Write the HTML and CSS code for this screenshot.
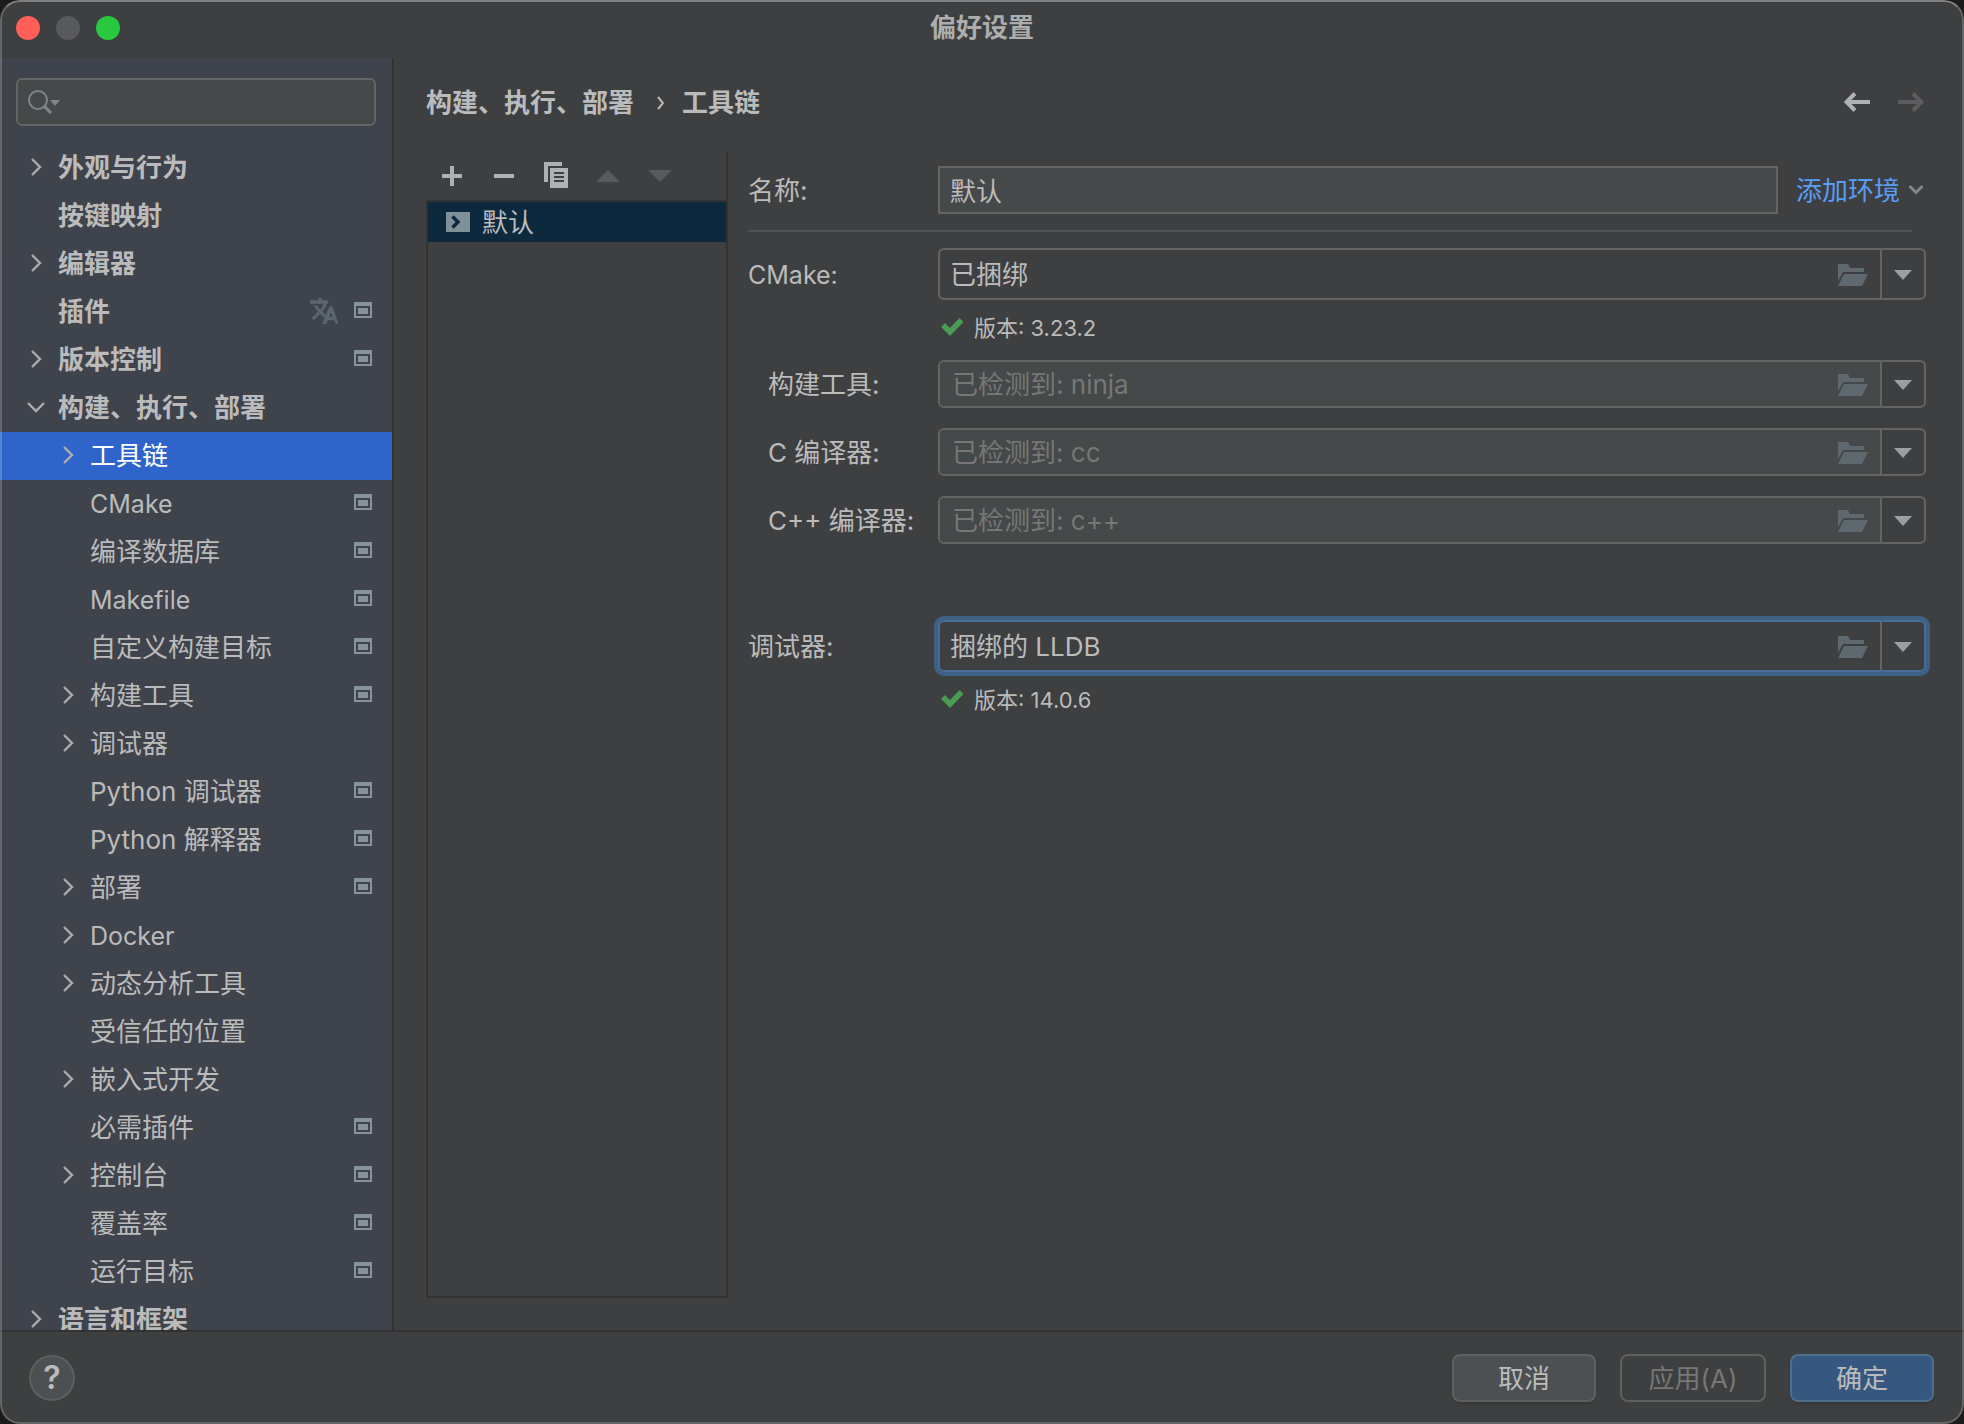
FILE: index.html
```html
<!DOCTYPE html>
<html lang="zh-CN">
<head>
<meta charset="utf-8">
<title>偏好设置</title>
<link rel="stylesheet" href="styles.css">
</head>
<body>
<svg class="sprite" aria-hidden="true">
  <symbol id="right" viewBox="0 0 24 24"><path d="M8 4l8 8-8 8" fill="none" stroke="#adadad" stroke-width="2.4"/></symbol>
  <symbol id="down" viewBox="0 0 24 24"><path d="M4 8l8 8 8-8" fill="none" stroke="#adadad" stroke-width="2.4"/></symbol>
  <symbol id="project" viewBox="0 0 18 16"><path fill="#87939a" fill-rule="evenodd" d="M0 0h18v16H0zM2 4v10h14V4zM4 6h10v6H4z"/></symbol>
  <symbol id="folder" viewBox="0 0 30 22"><path fill="#5e686f" d="M0 0h10l2 4h14v4H5L0 17zM6 10h24l-6 12H0z"/></symbol>
  <symbol id="arrow" viewBox="0 0 18 10"><path fill="#9c9ea0" d="M0 0h18L9 10z"/></symbol>
  <symbol id="check" viewBox="0 0 24 20"><path fill="none" stroke="#499c54" stroke-width="5.5" d="M3 9l7 7L21.500 4"/></symbol>
</svg>
<div class="window">
  <header class="titlebar">
    <div class="lights">
      <button class="light close" aria-label="关闭"></button>
      <button class="light minimize" aria-label="最小化" disabled></button>
      <button class="light maximize" aria-label="缩放"></button>
    </div>
    <h1>偏好设置</h1>
  </header>

  <div class="body">
    <nav class="sidebar" aria-label="设置">
      <label class="search">
        <svg width="32" height="24" viewBox="0 0 32 24" fill="none" aria-hidden="true"><circle cx="10" cy="10" r="9" stroke="#7b868d" stroke-width="2"/><path d="M16 16l7 7" stroke="#7b868d" stroke-width="3"/><path d="M22 10h10l-5 6z" fill="#7b868d"/></svg>
        <input type="search" aria-label="搜索">
      </label>
      <ul class="tree">
        <li><a href="#" class="row top"><svg class="chev"><use href="#right"/></svg><span>外观与行为</span></a></li>
        <li><a href="#" class="row top"><i class="chev"></i><span>按键映射</span></a></li>
        <li><a href="#" class="row top"><svg class="chev"><use href="#right"/></svg><span>编辑器</span></a></li>
        <li><a href="#" class="row top"><i class="chev"></i><span>插件</span><svg class="translate" viewBox="1 2 22 20"><path fill="#5c666e" stroke="#5c666e" stroke-width=".6" d="M12.87 15.07l-2.54-2.51.03-.03c1.74-1.94 2.98-4.17 3.71-6.53H15V4h-5V2H8v2H1v2h11.17C11.5 7.92 10.44 9.75 9 11.35 8.07 10.32 7.3 9.19 6.69 8h-2c.73 1.63 1.73 3.17 2.98 4.56l-5.09 5.02L4 19l5-5 3.11 3.11zM18.500 8.500h-2L11 22h2.500l1.300-3h5.500L21.500 22H23zm-2.700 8.200l1.700-4.600 1.700 4.600z"/></svg><svg class="project"><use href="#project"/></svg></a></li>
        <li><a href="#" class="row top"><svg class="chev"><use href="#right"/></svg><span>版本控制</span><svg class="project"><use href="#project"/></svg></a></li>
        <li><a href="#" class="row top"><svg class="chev"><use href="#down"/></svg><span>构建、执行、部署</span></a>
          <ul>
            <li><a href="#" class="row selected" aria-current="page"><svg class="chev"><use href="#right"/></svg><span>工具链</span></a></li>
            <li><a href="#" class="row"><i class="chev"></i><span class="latin">CMake</span><svg class="project"><use href="#project"/></svg></a></li>
            <li><a href="#" class="row"><i class="chev"></i><span>编译数据库</span><svg class="project"><use href="#project"/></svg></a></li>
            <li><a href="#" class="row"><i class="chev"></i><span class="latin">Makefile</span><svg class="project"><use href="#project"/></svg></a></li>
            <li><a href="#" class="row"><i class="chev"></i><span>自定义构建目标</span><svg class="project"><use href="#project"/></svg></a></li>
            <li><a href="#" class="row"><svg class="chev"><use href="#right"/></svg><span>构建工具</span><svg class="project"><use href="#project"/></svg></a></li>
            <li><a href="#" class="row"><svg class="chev"><use href="#right"/></svg><span>调试器</span></a></li>
            <li><a href="#" class="row"><i class="chev"></i><span>Python 调试器</span><svg class="project"><use href="#project"/></svg></a></li>
            <li><a href="#" class="row"><i class="chev"></i><span>Python 解释器</span><svg class="project"><use href="#project"/></svg></a></li>
            <li><a href="#" class="row"><svg class="chev"><use href="#right"/></svg><span>部署</span><svg class="project"><use href="#project"/></svg></a></li>
            <li><a href="#" class="row"><svg class="chev"><use href="#right"/></svg><span class="latin">Docker</span></a></li>
            <li><a href="#" class="row"><svg class="chev"><use href="#right"/></svg><span>动态分析工具</span></a></li>
            <li><a href="#" class="row"><i class="chev"></i><span>受信任的位置</span></a></li>
            <li><a href="#" class="row"><svg class="chev"><use href="#right"/></svg><span>嵌入式开发</span></a></li>
            <li><a href="#" class="row"><i class="chev"></i><span>必需插件</span><svg class="project"><use href="#project"/></svg></a></li>
            <li><a href="#" class="row"><svg class="chev"><use href="#right"/></svg><span>控制台</span><svg class="project"><use href="#project"/></svg></a></li>
            <li><a href="#" class="row"><i class="chev"></i><span>覆盖率</span><svg class="project"><use href="#project"/></svg></a></li>
            <li><a href="#" class="row"><i class="chev"></i><span>运行目标</span><svg class="project"><use href="#project"/></svg></a></li>
          </ul>
        </li>
        <li><a href="#" class="row top"><svg class="chev"><use href="#right"/></svg><span>语言和框架</span></a></li>
      </ul>
    </nav>

    <main class="content">
      <div class="heading">
        <h2 class="crumbs"><span>构建、执行、部署</span><svg width="12" height="14" viewBox="0 0 12 14" aria-hidden="true"><path d="M6 1l5 6-5 6" fill="none" stroke="#bbb" stroke-width="2"/></svg><span>工具链</span></h2>
        <div class="history">
          <button aria-label="后退"><svg width="26" height="20" viewBox="0 0 26 20" fill="none" stroke="#afb1b3" stroke-width="4"><path d="M26 10H3M11 1.500L2.500 10l8.500 8.500"/></svg></button>
          <button aria-label="前进" disabled><svg width="26" height="20" viewBox="0 0 26 20" fill="none" stroke="#5b5c5d" stroke-width="4"><path d="M0 10h23M15 1.500l8.500 8.500-8.500 8.500"/></svg></button>
        </div>
      </div>

      <div class="panes">
        <section class="master" aria-label="工具链列表">
          <div class="toolbar">
            <button aria-label="添加"><svg width="26" height="26" viewBox="0 0 26 26"><path fill="#afb1b3" d="M11 3h4v8h8v4h-8v8h-4v-8H3v-4h8z"/></svg></button>
            <button aria-label="移除"><svg width="26" height="26" viewBox="0 0 26 26"><path fill="#afb1b3" d="M3 11h20v4H3z"/></svg></button>
            <button aria-label="复制"><svg width="26" height="28" viewBox="0 0 26 28"><path fill="#afb1b3" fill-rule="evenodd" d="M1 0h18v4H5v16H1zM7 6h18v20H7zM11 10v2h10v-2zM11 14v2h10v-2zM11 18v2h10v-2z"/></svg></button>
            <button aria-label="上移" disabled><svg width="24" height="12" viewBox="0 0 24 12"><path fill="#595a5b" d="M12 0l12 12H0z"/></svg></button>
            <button aria-label="下移" disabled><svg width="24" height="12" viewBox="0 0 24 12"><path fill="#595a5b" d="M0 0h24L12 12z"/></svg></button>
          </div>
          <ul class="list">
            <li><svg width="24" height="20" viewBox="0 0 24 20" aria-hidden="true"><path fill="#7f9099" d="M0 0h24v20H0z"/><path fill="none" stroke="#0e293e" stroke-width="3.500" d="M6.500 4.500L12 10l-5.500 5.500"/></svg><span>默认</span></li>
          </ul>
        </section>

        <form class="form">
          <div class="field name">
            <label for="name">名称:</label>
            <input id="name" class="text" type="text" value="默认">
            <a href="#" class="add"><span>添加环境</span><svg width="16" height="12" viewBox="0 0 16 12" aria-hidden="true"><path d="M1.500 2L8 8.500 14.500 2" fill="none" stroke="#81878c" stroke-width="3"/></svg></a>
          </div>
          <hr>
          <div class="field">
            <label for="cmake" class="latin">CMake:</label>
            <div class="combo tall">
              <select id="cmake"><option>已捆绑</option></select>
              <button type="button" class="browse" aria-label="浏览"><svg><use href="#folder"/></svg></button>
              <button type="button" class="open" aria-label="展开"><svg><use href="#arrow"/></svg></button>
            </div>
          </div>
          <p class="status"><svg><use href="#check"/></svg><span>版本: 3.23.2</span></p>
          <div class="tools">
            <div class="field sub">
              <label for="build">构建工具:</label>
              <div class="combo editable">
                <input id="build" type="text" placeholder="已检测到: ninja">
                <button type="button" class="browse" aria-label="浏览"><svg><use href="#folder"/></svg></button>
                <button type="button" class="open" aria-label="展开"><svg><use href="#arrow"/></svg></button>
              </div>
            </div>
            <div class="field sub">
              <label for="cc">C 编译器:</label>
              <div class="combo editable">
                <input id="cc" type="text" placeholder="已检测到: cc">
                <button type="button" class="browse" aria-label="浏览"><svg><use href="#folder"/></svg></button>
                <button type="button" class="open" aria-label="展开"><svg><use href="#arrow"/></svg></button>
              </div>
            </div>
            <div class="field sub">
              <label for="cxx">C++ 编译器:</label>
              <div class="combo editable">
                <input id="cxx" type="text" placeholder="已检测到: c++">
                <button type="button" class="browse" aria-label="浏览"><svg><use href="#folder"/></svg></button>
                <button type="button" class="open" aria-label="展开"><svg><use href="#arrow"/></svg></button>
              </div>
            </div>
          </div>
          <div class="field">
            <label for="debugger">调试器:</label>
            <div class="combo tall focused">
              <select id="debugger"><option>捆绑的 LLDB</option></select>
              <button type="button" class="browse" aria-label="浏览"><svg><use href="#folder"/></svg></button>
              <button type="button" class="open" aria-label="展开"><svg><use href="#arrow"/></svg></button>
            </div>
          </div>
          <p class="status"><svg><use href="#check"/></svg><span>版本: 14.0.6</span></p>
        </form>
      </div>
    </main>
  </div>

  <footer class="footer">
    <button class="help" aria-label="帮助">?</button>
    <div class="actions">
      <button class="btn">取消</button>
      <button class="btn off" disabled>应用(A)</button>
      <button class="btn primary">确定</button>
    </div>
  </footer>
</div>
</body>
</html>
```
FILE: styles.css
```css
* { box-sizing: border-box; }

body {
  margin: 0;
  background: #1b1b1c;
  color: #bbbbbb;
  font: 26px/32px Inter, "Noto Sans CJK SC", sans-serif;
}

button, input, select {
  margin: 0;
  padding: 0;
  border: 0;
  outline: 0;
  background: none;
  color: inherit;
  font: inherit;
  appearance: none;
}

ul, p, h1, h2 { margin: 0; padding: 0; list-style: none; }
a { color: inherit; text-decoration: none; }
svg { display: block; flex: none; }
.sprite { position: absolute; width: 0; height: 0; }
.latin { font-size: 25px; }

.window {
  position: relative;
  display: flex;
  flex-direction: column;
  height: 100vh;
  overflow: hidden;
  border-radius: 20px;
  background: #3e3f41;
}

/* Hairline highlight over the window's edge */
.window::after {
  content: "";
  position: absolute;
  inset: 0;
  border: 2px solid rgba(255, 255, 255, .2);
  border-top-color: rgba(255, 255, 255, .34);
  border-radius: 20px;
  pointer-events: none;
}

.titlebar {
  display: grid;
  grid-template-columns: 1fr auto 1fr;
  align-items: center;
  height: 58px;
  padding: 0 16px 2px;
}
.titlebar h1 { font-size: 26px; line-height: 32px; color: #acadad; }
.lights { display: flex; gap: 16px; }
.light { width: 24px; height: 24px; border-radius: 50%; }
.close { background: #ff5f57; }
.minimize { background: #58595b; }
.maximize { background: #28c840; }

.body { display: flex; flex: 1; min-height: 0; }

.sidebar {
  flex: none;
  width: 394px;
  overflow: hidden;
  border-right: 2px solid #323232;
  background: #3f434c;
}
.search {
  display: flex;
  align-items: center;
  gap: 8px;
  height: 48px;
  margin: 20px 16px 18px;
  padding: 0 10px;
  border: 2px solid #646464;
  border-radius: 6px;
  background: #45494a;
}
.search input { flex: 1; min-width: 0; }

.row {
  display: flex;
  align-items: center;
  gap: 10px;
  height: 48px;
  padding: 0 20px 0 56px;
}
.row span { flex: 1; }
.top { padding-left: 24px; font-weight: 700; }
.selected { background: #2f65ca; color: #fff; }
.chev { width: 24px; height: 24px; margin-bottom: 2px; }
.project { width: 18px; height: 16px; margin-bottom: 4px; }
.translate { width: 28px; height: 26px; margin: 0 6px 2px 0; }

.content {
  display: flex;
  flex: 1;
  flex-direction: column;
  min-width: 0;
  padding: 28px 34px 32px 32px;
}
.heading {
  display: flex;
  align-items: center;
  justify-content: space-between;
  height: 32px;
  padding-right: 6px;
}
.crumbs { display: flex; align-items: center; gap: 18px; padding-top: 2px; font-size: 26px; line-height: 32px; }
.history { display: flex; gap: 28px; }

.panes { display: flex; flex: 1; gap: 20px; min-height: 0; padding-top: 34px; }
.master { display: flex; flex: none; flex-direction: column; width: 302px; }
.toolbar {
  display: flex;
  align-items: center;
  height: 48px;
  border-right: 2px solid #323232;
}
.toolbar button { display: flex; justify-content: center; width: 52px; }
.list { flex: 1; border: 2px solid #323232; }
.list li {
  display: flex;
  align-items: center;
  gap: 12px;
  height: 40px;
  padding: 0 18px;
  background: #0d293e;
}
.list span, .field label, .add span { padding-top: 2px; }

.form { flex: 1; min-width: 0; padding: 14px 4px 0 0; }
.field { display: grid; grid-template-columns: 190px minmax(0, 1fr); align-items: center; }
.sub label { padding-left: 20px; }
.name { grid-template-columns: 190px minmax(0, 1fr) auto; }
.text {
  height: 48px;
  padding: 0 10px 2px;
  border: 2px solid #646464;
  background: #45494a;
}
.add {
  display: flex;
  align-items: center;
  gap: 8px;
  padding: 0 2px 0 18px;
  color: #589df6;
}
hr { height: 2px; margin: 16px 14px 16px 0; border: 0; background: #515253; }

.combo {
  display: flex;
  height: 48px;
  overflow: hidden;
  border: 2px solid #646464;
  border-radius: 6px;
}
.tall { height: 52px; }
.combo select, .combo input { flex: 1; min-width: 0; padding: 2px 10px 0; }
.combo input { padding-left: 12px; }
.combo input::placeholder { color: #777777; opacity: 1; }
.editable input, .editable .browse { background: #45494a; }
.browse, .open { display: grid; place-items: center; padding-top: 2px; }
.browse { width: 54px; }
.browse svg { width: 30px; height: 22px; }
.open { width: 44px; border-left: 2px solid #646464; }
.open svg { width: 18px; height: 10px; }
.focused { border-color: #466d94; box-shadow: 0 0 0 4px #3d6185; }

.status {
  display: flex;
  align-items: center;
  gap: 10px;
  height: 60px;
  padding: 0 0 4px 192px;
  font-size: 22px;
}
.status svg { width: 24px; height: 20px; margin-bottom: 4px; }
.tools { display: grid; gap: 20px; padding-bottom: 76px; }

.footer {
  display: flex;
  align-items: center;
  justify-content: space-between;
  height: 94px;
  padding: 0 30px 0 29px;
  border-top: 2px solid #323232;
}
.help {
  width: 46px;
  height: 46px;
  border: 2px solid #5e6060;
  border-radius: 50%;
  background: #4c5052;
  font-size: 32px;
  font-weight: 600;
}
.actions { display: flex; gap: 24px; }
.btn {
  min-width: 144px;
  height: 48px;
  padding: 2px 26px 0;
  border: 2px solid #5e6060;
  border-radius: 8px;
  background: #4c5052;
  box-shadow: 0 2px 2px rgba(0, 0, 0, .15);
}
.off { min-width: 146px; background: none; box-shadow: none; color: #777777; }
.primary { border-color: #4c708c; background: #365880; }
```
